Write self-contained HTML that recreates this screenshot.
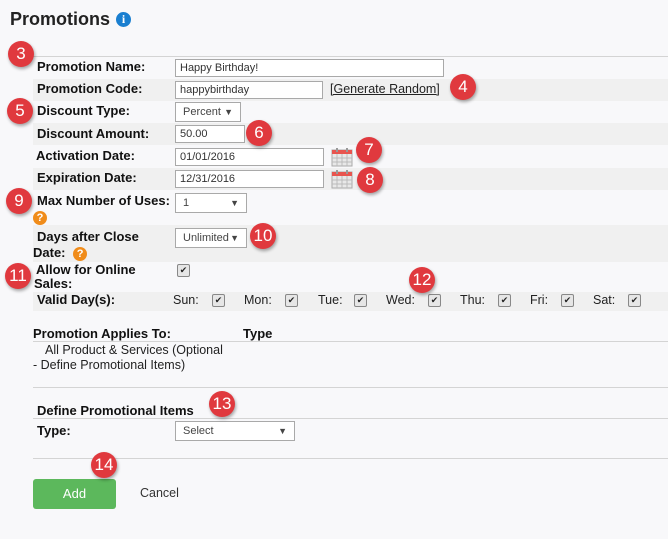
<!DOCTYPE html>
<html><head><meta charset="utf-8"><style>
body{margin:0;width:668px;height:539px;background:#f8f8fa;font-family:"Liberation Sans",Arial,sans-serif;position:relative;overflow:hidden;color:#111}
.a{position:absolute}
.lbl{position:absolute;font-weight:bold;font-size:13px;color:#111;line-height:14px}
.stripe{position:absolute;left:33px;right:0;background:#f0f0f0}
.inp{position:absolute;background:#fff;border:1px solid #a9a9a9;box-sizing:border-box;font-size:11px;color:#333;padding:2px 0 0 4px;height:18px}
.sel{position:absolute;background:#fff;border:1px solid #a9a9a9;box-sizing:border-box;font-size:11px;color:#444;padding:0 0 0 7px;height:20px;line-height:18px}
.sel:after{content:"▼";position:absolute;right:7px;top:0;font-size:9px;color:#444}
.b{position:absolute;width:26px;height:26px;border-radius:50%;background:#e0393e;color:#fff;font-size:17px;text-align:center;line-height:26px;box-shadow:1px 2px 3px rgba(0,0,0,.35)}
.cb{position:absolute;width:11px;height:11px;border:1px solid #888;border-radius:2px;background:#e6e6e6;font-size:9px;line-height:11px;text-align:center;color:#222}
.day{position:absolute;font-size:12.5px;color:#222;top:293px}
.line{position:absolute;left:33px;right:0;height:1px;background:#d4d4d4}
.q{display:inline-block;width:14px;height:14px;border-radius:50%;background:#f08c1a;color:#fff;font-size:11px;font-weight:bold;text-align:center;line-height:14px;vertical-align:middle}
</style></head><body>
<div class="a" style="left:10px;top:9px;font-size:18px;font-weight:bold;color:#222">Promotions</div>
<div class="a" style="left:116px;top:12px;width:15px;height:15px;border-radius:50%;background:#1a7fd0;color:#fff;font-weight:bold;font-size:12px;text-align:center;line-height:15px;font-family:'Liberation Serif',serif">i</div>

<div class="line" style="top:56px"></div>
<div class="stripe" style="top:79px;height:22px"></div>
<div class="stripe" style="top:123px;height:22px"></div>
<div class="stripe" style="top:168px;height:22px"></div>
<div class="stripe" style="top:225px;height:37px"></div>
<div class="stripe" style="top:292px;height:19px"></div>

<div class="lbl" style="left:37px;top:60px">Promotion Name:</div>
<div class="inp" style="left:175px;top:59px;width:269px">Happy Birthday!</div>
<div class="lbl" style="left:37px;top:82px">Promotion Code:</div>
<div class="inp" style="left:175px;top:81px;width:148px">happybirthday</div>
<div class="a" style="left:330px;top:82px;font-size:12.5px;color:#222;text-decoration:underline">[Generate Random]</div>
<div class="lbl" style="left:37px;top:104px">Discount Type:</div>
<div class="sel" style="left:175px;top:102px;width:66px">Percent</div>
<div class="lbl" style="left:37px;top:127px">Discount Amount:</div>
<div class="inp" style="left:175px;top:125px;width:70px">50.00</div>
<div class="lbl" style="left:36px;top:149px">Activation Date:</div>
<div class="inp" style="left:175px;top:148px;width:149px">01/01/2016</div>
<div class="lbl" style="left:37px;top:171px">Expiration Date:</div>
<div class="inp" style="left:175px;top:170px;width:149px">12/31/2016</div>
<svg class="a" style="left:331px;top:147px" width="22" height="20" viewBox="0 0 22 20"><rect x="1" y="3" width="20" height="16" fill="#e8e8e8" stroke="#aaa"/><rect x="1" y="3" width="20" height="4" fill="#e8554f"/><path d="M1 11H21M1 15H21M6 7V19M11 7V19M16 7V19" stroke="#bbb"/><rect x="5" y="1" width="2" height="4" fill="#999"/><rect x="15" y="1" width="2" height="4" fill="#999"/></svg>
<svg class="a" style="left:331px;top:169px" width="22" height="20" viewBox="0 0 22 20"><rect x="1" y="3" width="20" height="16" fill="#e8e8e8" stroke="#aaa"/><rect x="1" y="3" width="20" height="4" fill="#e8554f"/><path d="M1 11H21M1 15H21M6 7V19M11 7V19M16 7V19" stroke="#bbb"/><rect x="5" y="1" width="2" height="4" fill="#999"/><rect x="15" y="1" width="2" height="4" fill="#999"/></svg>
<div class="lbl" style="left:37px;top:194px">Max Number of Uses:</div>
<div class="a" style="left:33px;top:209px"><span class="q">?</span></div>
<div class="sel" style="left:175px;top:193px;width:72px">1</div>
<div class="lbl" style="left:37px;top:230px">Days after Close</div>
<div class="lbl" style="left:33px;top:246px">Date: <span class="q" style="margin-left:4px">?</span></div>
<div class="sel" style="left:175px;top:228px;width:72px">Unlimited</div>
<div class="lbl" style="left:36px;top:263px">Allow for Online</div>
<div class="lbl" style="left:34px;top:277px">Sales:</div>
<div class="cb" style="left:177px;top:264px">✔</div>
<div class="lbl" style="left:37px;top:293px">Valid Day(s):</div>
<div class="day" style="left:173px">Sun:</div><div class="cb" style="left:212px;top:294px">✔</div>
<div class="day" style="left:244px">Mon:</div><div class="cb" style="left:285px;top:294px">✔</div>
<div class="day" style="left:318px">Tue:</div><div class="cb" style="left:354px;top:294px">✔</div>
<div class="day" style="left:386px">Wed:</div><div class="cb" style="left:428px;top:294px">✔</div>
<div class="day" style="left:460px">Thu:</div><div class="cb" style="left:498px;top:294px">✔</div>
<div class="day" style="left:530px">Fri:</div><div class="cb" style="left:561px;top:294px">✔</div>
<div class="day" style="left:593px">Sat:</div><div class="cb" style="left:628px;top:294px">✔</div>

<div class="lbl" style="left:33px;top:327px">Promotion Applies To:</div>
<div class="lbl" style="left:243px;top:327px">Type</div>
<div class="line" style="top:341px"></div>
<div class="a" style="left:45px;top:343px;font-size:12.5px;color:#222">All Product &amp; Services (Optional</div>
<div class="a" style="left:33px;top:358px;font-size:12.5px;color:#222">- Define Promotional Items)</div>
<div class="line" style="top:387px"></div>
<div class="lbl" style="left:37px;top:404px">Define Promotional Items</div>
<div class="line" style="top:418px"></div>
<div class="lbl" style="left:37px;top:424px">Type:</div>
<div class="sel" style="left:175px;top:421px;width:120px">Select</div>
<div class="line" style="top:458px"></div>
<div class="a" style="left:33px;top:479px;width:83px;height:30px;background:#5cb85c;border-radius:3px;color:#fff;font-size:13px;text-align:center;line-height:30px">Add</div>
<div class="a" style="left:140px;top:486px;font-size:12.5px;color:#333">Cancel</div>

<div class="b" style="left:8px;top:41px">3</div>
<div class="b" style="left:450px;top:74px">4</div>
<div class="b" style="left:7px;top:98px">5</div>
<div class="b" style="left:246px;top:120px">6</div>
<div class="b" style="left:356px;top:137px">7</div>
<div class="b" style="left:357px;top:167px">8</div>
<div class="b" style="left:6px;top:188px">9</div>
<div class="b" style="left:250px;top:223px">10</div>
<div class="b" style="left:5px;top:263px">11</div>
<div class="b" style="left:409px;top:267px">12</div>
<div class="b" style="left:209px;top:391px">13</div>
<div class="b" style="left:91px;top:452px">14</div>
</body></html>
